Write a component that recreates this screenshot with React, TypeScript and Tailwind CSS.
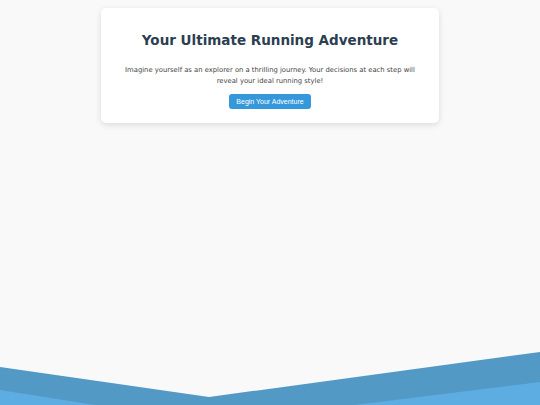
export default function App() {
  return (
    <div className="relative min-h-[405px] w-full overflow-hidden bg-[#f9f9f9] font-['DejaVu_Sans',sans-serif]">
      <div className="flex justify-center pt-2">
        <div className="w-[338px] rounded-[5px] bg-white px-5 pt-[24px] pb-[12px] text-center shadow-[0_2px_6px_rgba(0,0,0,0.12)]">
          <h1 className="text-[13.5px] leading-[17px] font-bold text-[#2c3e50]">
            Your Ultimate Running Adventure
          </h1>
          <p className="mt-[16px] text-[6.8px] leading-[11px] text-[#444]">
            Imagine yourself as an explorer on a thrilling journey. Your decisions at each step will reveal your ideal running style!
          </p>
          <button className="mt-[6px] h-[15px] rounded-[3px] bg-[#3498db] px-[7px] font-['Liberation_Sans',Arial,sans-serif] text-[7px] leading-[15px] text-white">
            Begin Your Adventure
          </button>
        </div>
      </div>

      {/* layered waves along the bottom edge */}
      <svg
        className="absolute bottom-0 left-0 h-[53px] w-full"
        viewBox="0 352 540 53"
        preserveAspectRatio="none"
      >
        <polygon points="0,367 209,397 540,352 540,405 0,405" fill="#5399c6" />
        <polygon points="0,390 209,423 540,382 540,405 0,405" fill="#5dade2" />
      </svg>
    </div>
  );
}
